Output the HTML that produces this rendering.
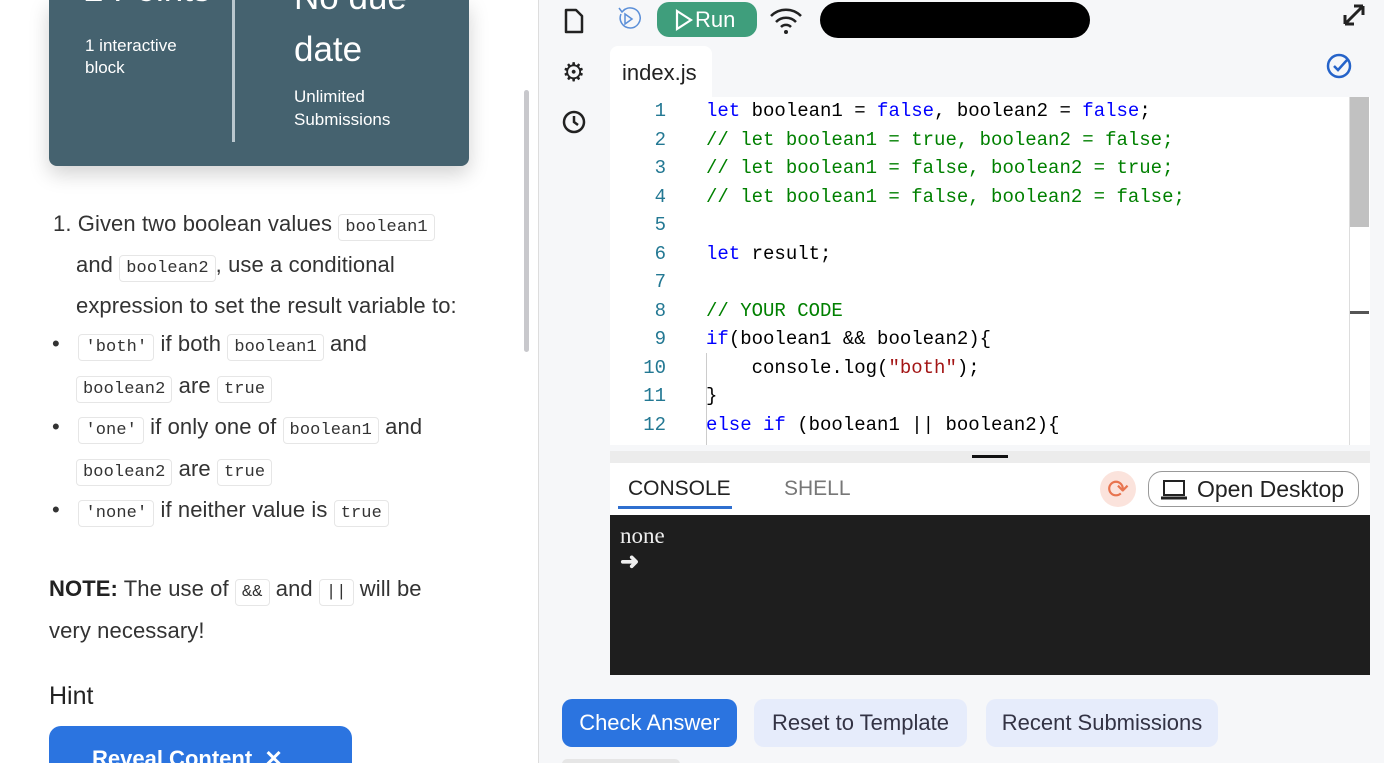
<!DOCTYPE html>
<html><head><meta charset="utf-8"><style>
*{box-sizing:border-box;margin:0;padding:0}
html,body{width:1384px;height:763px;overflow:hidden}
body{position:relative;background:#fff;font-family:"Liberation Sans",sans-serif;color:#222}
.a{position:absolute;white-space:nowrap}
.t{font-size:22px;color:#333;letter-spacing:0.1px}
code{font-family:"Liberation Mono",monospace;font-size:17px;border:1px solid #e6e6e6;border-radius:4px;padding:3px 6px;color:#333;background:#fff}
.card{left:49px;top:0;width:420px;height:166px;background:#45626f;border-radius:0 0 8px 8px;box-shadow:0 8px 20px rgba(0,0,0,.18);color:#fff;overflow:hidden}
.right{left:538px;top:0;width:846px;height:763px;background:#f6f7f9;border-left:1px solid #ddd}
.code{font-family:"Liberation Mono",monospace;font-size:19px;line-height:28.5px}
.ln{color:#237893;text-align:right;width:40px}
.kw{color:#0000ff}.cm{color:#008000}.st{color:#a31515}
.btn{height:48px;border-radius:10px;font-size:22px;line-height:48px;text-align:center}
</style></head><body>
<div class="a card">
 <div class="a" style="left:35px;top:-30px;font-size:35px;line-height:40px">2 Points</div>
 <div class="a" style="left:36px;top:35px;font-size:17px;line-height:22px">1 interactive<br>block</div>
 <div class="a" style="left:183px;top:0;width:3px;height:142px;background:#b9c7ce"></div>
 <div class="a" style="left:245px;top:-28px;font-size:35px;line-height:52px">No due<br>date</div>
 <div class="a" style="left:245px;top:85px;font-size:17px;line-height:23px">Unlimited<br>Submissions</div>
</div>
<div class="a" style="left:524px;top:90px;width:5px;height:262px;background:#c8c8cc;border-radius:3px"></div>
<div class="a t" style="left:53px;top:211px">1. Given two boolean values <code>boolean1</code></div>
<div class="a t" style="left:76px;top:252px">and <code>boolean2</code>, use a conditional</div>
<div class="a t" style="left:76px;top:293px">expression to set the result variable to:</div>
<div class="a t" style="left:52px;top:331px">•&nbsp;&nbsp;&nbsp;<code>'both'</code> if both <code>boolean1</code> and</div>
<div class="a t" style="left:76px;top:373px"><code>boolean2</code> are <code>true</code></div>
<div class="a t" style="left:52px;top:414px">•&nbsp;&nbsp;&nbsp;<code>'one'</code> if only one of <code>boolean1</code> and</div>
<div class="a t" style="left:76px;top:456px"><code>boolean2</code> are <code>true</code></div>
<div class="a t" style="left:52px;top:497px">•&nbsp;&nbsp;&nbsp;<code>'none'</code> if neither value is <code>true</code></div>
<div class="a t" style="left:49px;top:576px"><b style="color:#222">NOTE:</b> The use of <code>&amp;&amp;</code> and <code>||</code> will be</div>
<div class="a t" style="left:49px;top:618px">very necessary!</div>
<div class="a" style="left:49px;top:682px;font-size:25px;color:#222">Hint</div>
<div class="a" style="left:49px;top:726px;width:303px;height:60px;background:#2b74e0;border-radius:12px;color:#fff;font-weight:bold;font-size:22px;padding:20px 0 0 43px">Reveal Content &nbsp;✕</div>

<div class="a right">
 <svg class="a" style="left:23px;top:8px" width="24" height="26" viewBox="0 0 24 26"><path d="M4 2h10l6 6v16H4z" fill="none" stroke="#222" stroke-width="2.5" stroke-linejoin="round"/></svg>
 <div class="a" style="left:23px;top:57px;font-size:26px;color:#222">⚙</div>
 <svg class="a" style="left:23px;top:110px" width="24" height="24"><circle cx="12" cy="12" r="10" fill="none" stroke="#222" stroke-width="2.5"/><path d="M12 6v6l4 3" fill="none" stroke="#222" stroke-width="2.5"/></svg>
 <svg class="a" style="left:76px;top:5px" width="26" height="28"><path d="M8 6a10 10 0 1 1-2 3" fill="none" stroke="#5b8fd8" stroke-width="1.5"/><path d="M10 9l7 5-7 5z" fill="none" stroke="#5b8fd8" stroke-width="1.5"/><path d="M4 3l3 4 3-3" fill="none" stroke="#5b8fd8" stroke-width="1.5"/></svg>
 <div class="a" style="left:118px;top:2px;width:100px;height:35px;background:#3f9e7c;border-radius:12px;color:#fff;font-size:22px;line-height:35px;padding-left:38px">Run</div>
 <svg class="a" style="left:136px;top:9px" width="18" height="22"><path d="M2 2l14 9-14 9z" fill="none" stroke="#fff" stroke-width="2.2"/></svg>
 <svg class="a" style="left:229px;top:5px" width="36" height="30"><path d="M3 11a21 21 0 0 1 30 0M8 17a14 14 0 0 1 20 0M13 22a7 7 0 0 1 10 0" fill="none" stroke="#222" stroke-width="2.5"/><circle cx="18" cy="27" r="2" fill="#222"/></svg>
 <div class="a" style="left:281px;top:2px;width:270px;height:36px;background:#000;border-radius:18px"></div>
 <svg class="a" style="left:802px;top:2px" width="26" height="26"><path d="M4 22L22 4M4 22v-9M4 22h9M22 4v9M22 4h-9" fill="none" stroke="#222" stroke-width="3"/></svg>
 <svg class="a" style="left:787px;top:53px" width="26" height="26"><circle cx="13" cy="13" r="11" fill="none" stroke="#2563c9" stroke-width="2.5"/><path d="M8 13l4 4 9-10" fill="none" stroke="#2563c9" stroke-width="2.5"/></svg>
 <div class="a" style="left:71px;top:46px;width:102px;height:60px;background:#fff;border-radius:8px 8px 0 0;font-size:22px;color:#222;padding:14px 0 0 12px">index.js</div>
 <div class="a" style="left:71px;top:97px;width:760px;height:348px;background:#fff;overflow:hidden">
  <div class="a" style="left:740px;top:0;width:19px;height:130px;background:#c1c1c1"></div>
  <div class="a" style="left:739px;top:0;width:1px;height:348px;background:#ddd"></div>
  <div class="a" style="left:740px;top:214px;width:19px;height:3px;background:#555"></div>
  <div class="a" style="left:96px;top:256px;width:1px;height:92px;background:#ccc"></div>
  <div class="a code ln" style="left:16px;top:0">1<br>2<br>3<br>4<br>5<br>6<br>7<br>8<br>9<br>10<br>11<br>12</div>
  <div class="a code" style="left:96px;top:0;color:#000"><span class="kw">let</span> boolean1 = <span class="kw">false</span>, boolean2 = <span class="kw">false</span>;<br><span class="cm">// let boolean1 = true, boolean2 = false;</span><br><span class="cm">// let boolean1 = false, boolean2 = true;</span><br><span class="cm">// let boolean1 = false, boolean2 = false;</span><br><br><span class="kw">let</span> result;<br><br><span class="cm">// YOUR CODE</span><br><span class="kw">if</span>(boolean1 &amp;&amp; boolean2){<br>&nbsp;&nbsp;&nbsp;&nbsp;console.log(<span class="st">"both"</span>);<br>}<br><span class="kw">else if</span> (boolean1 || boolean2){</div>
 </div>
 <div class="a" style="left:71px;top:451px;width:760px;height:12px;background:#ececec"></div>
 <div class="a" style="left:433px;top:455px;width:36px;height:3px;background:#111"></div>
 <div class="a" style="left:71px;top:463px;width:760px;height:52px;background:#fff"></div>
 <div class="a" style="left:89px;top:477px;font-size:21px;color:#222">CONSOLE</div>
 <div class="a" style="left:79px;top:506px;width:114px;height:3px;background:#2f6fcf"></div>
 <div class="a" style="left:245px;top:477px;font-size:21px;color:#777">SHELL</div>
 <div class="a" style="left:561px;top:471px;width:36px;height:36px;border-radius:50%;background:#fbe3dc;color:#e8744f;font-size:26px;text-align:center;line-height:36px">⟳</div>
 <div class="a" style="left:609px;top:471px;width:211px;height:36px;border:1px solid #999;border-radius:14px;font-size:23px;line-height:34px;padding-left:48px;color:#222">Open Desktop</div>
 <svg class="a" style="left:622px;top:480px" width="26" height="20"><rect x="3" y="1" width="20" height="14" fill="none" stroke="#222" stroke-width="2"/><path d="M0 18h26" stroke="#222" stroke-width="3"/></svg>
 <div class="a" style="left:71px;top:515px;width:760px;height:160px;background:#1e1e1e;color:#eee;font-family:'Liberation Serif',serif;font-size:23px;padding:8px 10px;line-height:26px">none<br><b>➜</b></div>
 <div class="a btn" style="left:23px;top:699px;width:175px;background:#2b74e0;color:#fff">Check Answer</div>
 <div class="a btn" style="left:215px;top:699px;width:213px;background:#e6ecfb;color:#334">Reset to Template</div>
 <div class="a btn" style="left:447px;top:699px;width:232px;background:#e6ecfb;color:#334">Recent Submissions</div>
 <div class="a" style="left:23px;top:759px;width:118px;height:10px;background:#e6e6e6;border-radius:6px"></div>
</div>
</body></html>
